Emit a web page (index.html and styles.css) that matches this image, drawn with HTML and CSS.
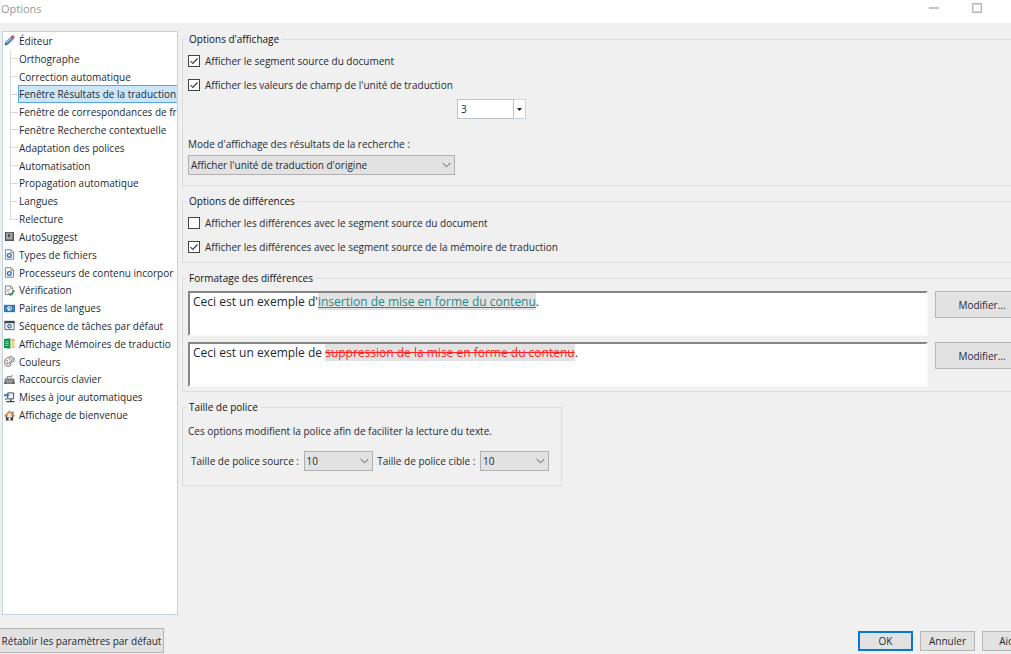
FILE: index.html
```html
<!DOCTYPE html>
<html lang="fr">
<head>
<meta charset="utf-8">
<title>Options</title>
<link rel="stylesheet" href="styles.css">
</head>
<body>
<div class="window">
  <header class="titlebar">
    <h1 class="title">Options</h1>
    <div class="window-controls">
      <button class="window-button" type="button" aria-label="Réduire"><svg width="10" height="10" viewBox="0 0 10 10"><path d="M0 5h10" stroke="#c4c4c4" stroke-width="2"/></svg></button>
      <button class="window-button" type="button" aria-label="Agrandir"><svg width="10" height="10" viewBox="0 0 10 10"><path d="M.75.75h8.5v8.5H.75z" fill="none" stroke="#b4b4b4" stroke-width="1.3"/></svg></button>
    </div>
  </header>
  <div class="body">
    <nav class="sidebar" aria-label="Catégories">
      <ul class="tree">
        <li class="node"><svg class="icon" viewBox="0 0 12 12"><path d="M1 11l1-3.5 6-6 2.5 2.5-6 6z" fill="#4b8fd0" stroke="#356da5" stroke-width=".6"/><path d="M2.8 8.2l5.5-5.5" stroke="#b9dcf5" stroke-width="1"/><path d="M7.300 2L9 .4q1.800-.3 2.600 2.200L10 4.300z" fill="#d9534a"/><path d="M1 11l.7-2.3 1.6 1.6z" fill="#27435f"/></svg><a class="label" href="#editeur">Éditeur</a></li>
        <li class="node child"><a class="label" href="#orthographe">Orthographe</a></li>
        <li class="node child"><a class="label" href="#correction">Correction automatique</a></li>
        <li class="node child"><a class="label selected" href="#resultats" aria-current="page">Fenêtre Résultats de la traduction</a></li>
        <li class="node child"><a class="label" href="#correspondances">Fenêtre de correspondances de fr</a></li>
        <li class="node child"><a class="label" href="#recherche">Fenêtre Recherche contextuelle</a></li>
        <li class="node child"><a class="label" href="#adaptation">Adaptation des polices</a></li>
        <li class="node child"><a class="label" href="#automatisation">Automatisation</a></li>
        <li class="node child"><a class="label" href="#propagation">Propagation automatique</a></li>
        <li class="node child"><a class="label" href="#langues">Langues</a></li>
        <li class="node child last"><a class="label" href="#relecture">Relecture</a></li>
        <li class="node"><svg class="icon" viewBox="0 0 12 12"><rect x="1" y="1" width="10" height="10" rx="1" fill="#4b4b4b"/><path d="M2.5 2h6v6.500h-6z" fill="#c5c5c5"/><path d="M4 3h3v4H4z" fill="#555"/><path d="M9.5 2v7.500H2" fill="none" stroke="#8c8c8c"/></svg><a class="label" href="#autosuggest">AutoSuggest</a></li>
        <li class="node"><svg class="icon" viewBox="0 0 12 12"><path d="M1.5.8h6.3l2.7 2.7v7.7h-9z" fill="#fff" stroke="#777"/><path d="M7.5 1v2.8h3" fill="none" stroke="#777" stroke-width=".8"/><circle cx="5.8" cy="7" r="2" fill="#fff" stroke="#3778ba" stroke-width="1.5"/><path d="M5.8 4v1M5.8 9v1M2.8 7h1M7.8 7h1M3.7 4.9l.7.7M7.2 8.4l.7.7M3.7 9.1l.7-.7M7.2 5.6l.7-.7" stroke="#3778ba"/></svg><a class="label" href="#types">Types de fichiers</a></li>
        <li class="node"><svg class="icon" viewBox="0 0 12 12"><path d="M1.5.8h6.3l2.7 2.7v7.7h-9z" fill="#fff" stroke="#777"/><path d="M7.5 1v2.8h3" fill="none" stroke="#777" stroke-width=".8"/><circle cx="5.8" cy="7" r="2" fill="#fff" stroke="#3778ba" stroke-width="1.5"/><path d="M5.8 4v1M5.8 9v1M2.8 7h1M7.8 7h1M3.7 4.9l.7.7M7.2 8.4l.7.7M3.7 9.1l.7-.7M7.2 5.6l.7-.7" stroke="#3778ba"/></svg><a class="label" href="#processeurs">Processeurs de contenu incorpor</a></li>
        <li class="node"><svg class="icon" viewBox="0 0 12 12"><path d="M1.5 1h5.8l2.2 2.2v7.3h-8z" fill="#fff" stroke="#777"/><path d="M7 1v2.6h2.5M3 5h4M3 7h2.5" fill="none" stroke="#777" stroke-width=".8"/><path d="M5.2 8.7l2 2.2 4.2-5" fill="none" stroke="#1c9c50" stroke-width="1.6"/></svg><a class="label" href="#verification">Vérification</a></li>
        <li class="node"><svg class="icon" viewBox="0 0 12 12"><path d="M0 2h12v8H0z" fill="#2f72b5"/><circle cx="6" cy="6" r="2.6" fill="#e5f0fa"/><path d="M5 4.7h1.800v2.800" fill="none" stroke="#2f72b5" stroke-width=".9"/><path d="M1.800 4v4M10.200 4v4" stroke="#6ba0d4" stroke-width=".8"/></svg><a class="label" href="#paires">Paires de langues</a></li>
        <li class="node"><svg class="icon" viewBox="0 0 12 12"><path d="M1 1.5h10v9H1z" fill="#fff" stroke="#555"/><path d="M.5 1h11v2.5H.5z" fill="#444"/><circle cx="6" cy="6.8" r="1.8" fill="#fff" stroke="#3778ba" stroke-width="1.5"/><path d="M6 4v1M6 8.5v1M3.2 6.8h1M7.8 6.8h1" stroke="#3778ba"/></svg><a class="label" href="#sequence">Séquence de tâches par défaut</a></li>
        <li class="node"><svg class="icon" viewBox="0 0 12 12"><path d="M0 1.2l7-1v11.600l-7-1z" fill="#159357"/><path d="M1.500 4h3.500M1.500 6h3.500M1.500 8h3.500" stroke="#c3ead4" stroke-width=".8"/><path d="M8 1h3.500v3H8z" fill="#f2b53b"/><path d="M8 4.700h3.500v2.800H8z" fill="#e5cf77"/><path d="M8 8h3.500v3H8z" fill="#f0c468"/></svg><a class="label" href="#memoires">Affichage Mémoires de traductio</a></li>
        <li class="node"><svg class="icon" viewBox="0 0 12 12"><path d="M4 1.500q6-2 7.300 2 .5 3.500-3 3.300-2 .2-1 2t-2 2.500q-4.500.2-4.700-4.300 0-4 3.400-5.500z" fill="#eee" stroke="#6d6d6d"/><circle cx="3.500" cy="5" r="1" fill="#d78750"/><circle cx="6.300" cy="3" r="1" fill="#7aa95b"/><circle cx="3.600" cy="8" r="1" fill="#6386af"/><path d="M10.500 2.500l-6 6.500" stroke="#7d7167"/></svg><a class="label" href="#couleurs">Couleurs</a></li>
        <li class="node"><svg class="icon" viewBox="0 0 12 12"><path d="M3.500 5V3h5V1" fill="none" stroke="#666"/><path d="M1 5h10l1 6H0z" fill="#666"/><path d="M2 6.500h8M1.500 8h9M3 9.700h6" stroke="#eee" stroke-width=".8" stroke-dasharray="1.200 .6"/></svg><a class="label" href="#raccourcis">Raccourcis clavier</a></li>
        <li class="node"><svg class="icon" viewBox="0 0 12 12"><path d="M4 1h6.500v6.500H4z" fill="#e9eef3" stroke="#444"/><path d="M2.500 10.500h9M7.500 8v2" stroke="#444" stroke-width="1.500"/><path d="M0 2.500h3V1l3 2.500-3 2.500V4.500H0zM1 7h2.500v1.500H1z" fill="#3977ad"/></svg><a class="label" href="#mises-a-jour">Mises à jour automatiques</a></li>
        <li class="node"><svg class="icon" viewBox="0 0 12 12"><path d="M2 6h8v5.500H2z" fill="#444"/><path d="M6 4l3 3v1H3V7z" fill="#f6e6d6"/><path d="M5 8h2v3.500H5z" fill="#fff"/><path d="M.700 7L6 1.700 11.300 7" fill="none" stroke="#d77b32" stroke-width="1.700"/><path d="M9 1.500h1.300v3L9 3.500z" fill="#555"/></svg><a class="label" href="#bienvenue">Affichage de bienvenue</a></li>
      </ul>
    </nav>
    <main class="panel">
      <fieldset class="group display">
        <legend class="legend">Options d'affichage</legend>
        <label class="check"><input type="checkbox" checked>Afficher le segment source du document</label>
        <label class="check"><input type="checkbox" checked>Afficher les valeurs de champ de l'unité de traduction</label>
        <div class="combo">
          <input class="combo-input" type="text" value="3" aria-label="Nombre de valeurs">
          <button class="combo-button" type="button" aria-label="Ouvrir la liste"><svg width="5" height="3" viewBox="0 0 5 3"><path d="M0 0h5L2.500 3z" fill="#222"/></svg></button>
        </div>
        <label class="mode-label" for="mode">Mode d'affichage des résultats de la recherche :</label>
        <select class="select mode" id="mode"><option>Afficher l'unité de traduction d'origine</option></select>
      </fieldset>
      <fieldset class="group differences">
        <legend class="legend">Options de différences</legend>
        <label class="check"><input type="checkbox">Afficher les différences avec le segment source du document</label>
        <label class="check"><input type="checkbox" checked>Afficher les différences avec le segment source de la mémoire de traduction</label>
      </fieldset>
      <fieldset class="group formatting">
        <legend class="legend">Formatage des différences</legend>
        <div class="sample-row">
          <p class="sample">Ceci est un exemple d'<ins class="inserted">insertion de mise en forme du contenu</ins>.</p>
          <button class="button modify" type="button">Modifier...</button>
        </div>
        <div class="sample-row">
          <p class="sample">Ceci est un exemple de <del class="deleted">suppression de la mise en forme du contenu</del>.</p>
          <button class="button modify" type="button">Modifier...</button>
        </div>
      </fieldset>
      <fieldset class="group fonts">
        <legend class="legend">Taille de police</legend>
        <p class="hint">Ces options modifient la police afin de faciliter la lecture du texte.</p>
        <div class="sizes">
          <label class="size-label" for="source">Taille de police source :</label>
          <select class="select size" id="source"><option>10</option></select>
          <label class="size-label" for="target">Taille de police cible :</label>
          <select class="select size" id="target"><option>10</option></select>
        </div>
      </fieldset>
    </main>
  </div>
  <footer class="footer">
    <button class="button reset" type="button">Rétablir les paramètres par défaut</button>
    <div class="actions">
      <button class="button action primary" type="button">OK</button>
      <button class="button action" type="button">Annuler</button>
      <button class="button action" type="button">Aide</button>
    </div>
  </footer>
</div>
</body>
</html>
```

FILE: styles.css
```css
* { box-sizing: border-box; }
body {
  margin: 0;
  background: #f0f0f0;
  color: #1e2a35;
  font: 10px/14px "Open Sans", "Noto Sans", sans-serif;
}
button, input, select { font: inherit; color: inherit; }
.window {
  display: flex;
  flex-direction: column;
  min-height: 100vh;
  overflow: hidden;
}
.titlebar {
  display: flex;
  justify-content: space-between;
  height: 23px;
  padding: 2px 29px 0 1px;
  background: #fff;
}
.title { margin: 0; font-size: 11px; font-weight: 400; line-height: 14px; color: #999; }
.window-controls { display: flex; gap: 33px; }
.window-button { display: flex; width: 10px; height: 12px; padding: 1px 0; border: 0; background: none; }
.body { display: flex; flex: 1; gap: 4px; padding: 8px 0 0 2px; }
.sidebar {
  flex: none;
  width: 176px;
  border: 1px solid #c5d3dc;
  background: #fff;
  overflow: hidden;
}
.tree {
  display: grid;
  grid-auto-rows: 1fr;
  height: 392px;
  margin: 0;
  padding: 0;
  list-style: none;
}
.node { display: flex; align-items: center; min-height: 0; white-space: nowrap; }
.icon { flex: none; width: 11px; height: 11px; margin-left: 1px; }
.label {
  flex: none;
  margin-left: 2px;
  padding: 1px;
  border: 1px solid transparent;
  color: inherit;
  text-decoration: none;
}
.child::before {
  content: "";
  align-self: stretch;
  width: 7px;
  margin-left: 7px;
  border-left: 1px solid #d9d9d9;
  background: linear-gradient(#d9d9d9, #d9d9d9) center / 100% 1px no-repeat;
}
.child .label { margin-left: 0; padding: 1px 0; }
.child.last::before { align-self: flex-start; height: 9px; border-bottom: 1px solid #d9d9d9; background: none; }
.child .selected { flex: 1; border-color: #5ba5df; background: #cce6f9; }
.panel { flex: 1; min-width: 0; margin-right: -40px; padding-top: 1px; }
.group { min-width: 0; margin: 0 0 8px; padding: 0 5px; border: 1px solid #dedede; }
.legend { padding: 0 3px; margin-left: -2px; color: #111; }
.display { height: 154px; }
.differences { height: 69px; }
.formatting { height: 121px; padding-top: 6px; }
.fonts { width: 380px; height: 86px; margin-bottom: 0; padding-top: 10px; }
.check { display: flex; align-items: center; gap: 5px; width: fit-content; margin-top: 8px; }
.check + .check { margin-top: 10px; }
.check input {
  appearance: none;
  width: 12px;
  height: 12px;
  margin: 0;
  border: 1px solid #444;
  background: #fff;
}
.check input:checked {
  background: #fff url("data:image/svg+xml,%3Csvg xmlns='http://www.w3.org/2000/svg' viewBox='0 0 10 10'%3E%3Cpath d='M1.500 5l2.300 2.500 4.700-5' fill='none' stroke='%23333' stroke-width='1.100'/%3E%3C/svg%3E") center / 10px 10px no-repeat;
}
.combo { display: flex; width: 69px; height: 20px; margin: 7px 0 0 269px; }
.combo-input { flex: 1; min-width: 0; padding: 0 3px; border: 1px solid #bcc3c6; border-radius: 0; background: #fff; }
.combo-button {
  display: flex;
  align-items: center;
  justify-content: center;
  width: 12px;
  padding: 0;
  border: 1px solid #c5d8e2;
  border-left: 0;
  background: #fff;
}
.mode-label { display: block; width: fit-content; margin: 18px 0 4px; }
.select {
  appearance: none;
  height: 20px;
  padding: 0 2px;
  border: 1px solid #b0b0b0;
  border-radius: 0;
  background: #e2e2e2 url("data:image/svg+xml,%3Csvg xmlns='http://www.w3.org/2000/svg' viewBox='0 0 9 6'%3E%3Cpath d='M.7 1l3.800 3.800L8.300 1' fill='none' stroke='%23555'/%3E%3C/svg%3E") right 3px center / 9px 6px no-repeat;
}
.mode { display: block; width: 267px; }
.sample-row { display: flex; gap: 7px; height: 45px; }
.sample-row + .sample-row { margin-top: 6px; }
.sample {
  flex: 1;
  margin: 0;
  padding: 0 3px;
  border: 2px solid #fafafa;
  border-top-color: #858585;
  border-left-color: #858585;
  background: #fff;
  font-size: 12px;
  line-height: 17px;
}
.inserted { background: #e2e2e2; color: #238b8b; }
.deleted { background: #e2e2e2; color: #f22; }
.button { padding: 0; border: 1px solid #b5b5b5; border-radius: 0; background: #e2e2e2; white-space: nowrap; }
.modify { flex: none; width: 110px; height: 27px; padding-right: 16px; }
.hint { margin: 0 0 13px; }
.sizes { display: flex; align-items: center; justify-content: space-between; padding: 0 7px 0 3px; }
.size-label { flex: none; white-space: nowrap; }
.size { flex: none; width: 69px; }
.footer { display: flex; justify-content: space-between; padding: 13px 0 1px; }
.reset { width: 164px; height: 25px; border-left: 0; }
.actions { display: flex; gap: 7px; margin: 3px -26px 0 0; }
.action { width: 55px; height: 20px; }
.primary { border: 2px solid #0878d4; }
```
